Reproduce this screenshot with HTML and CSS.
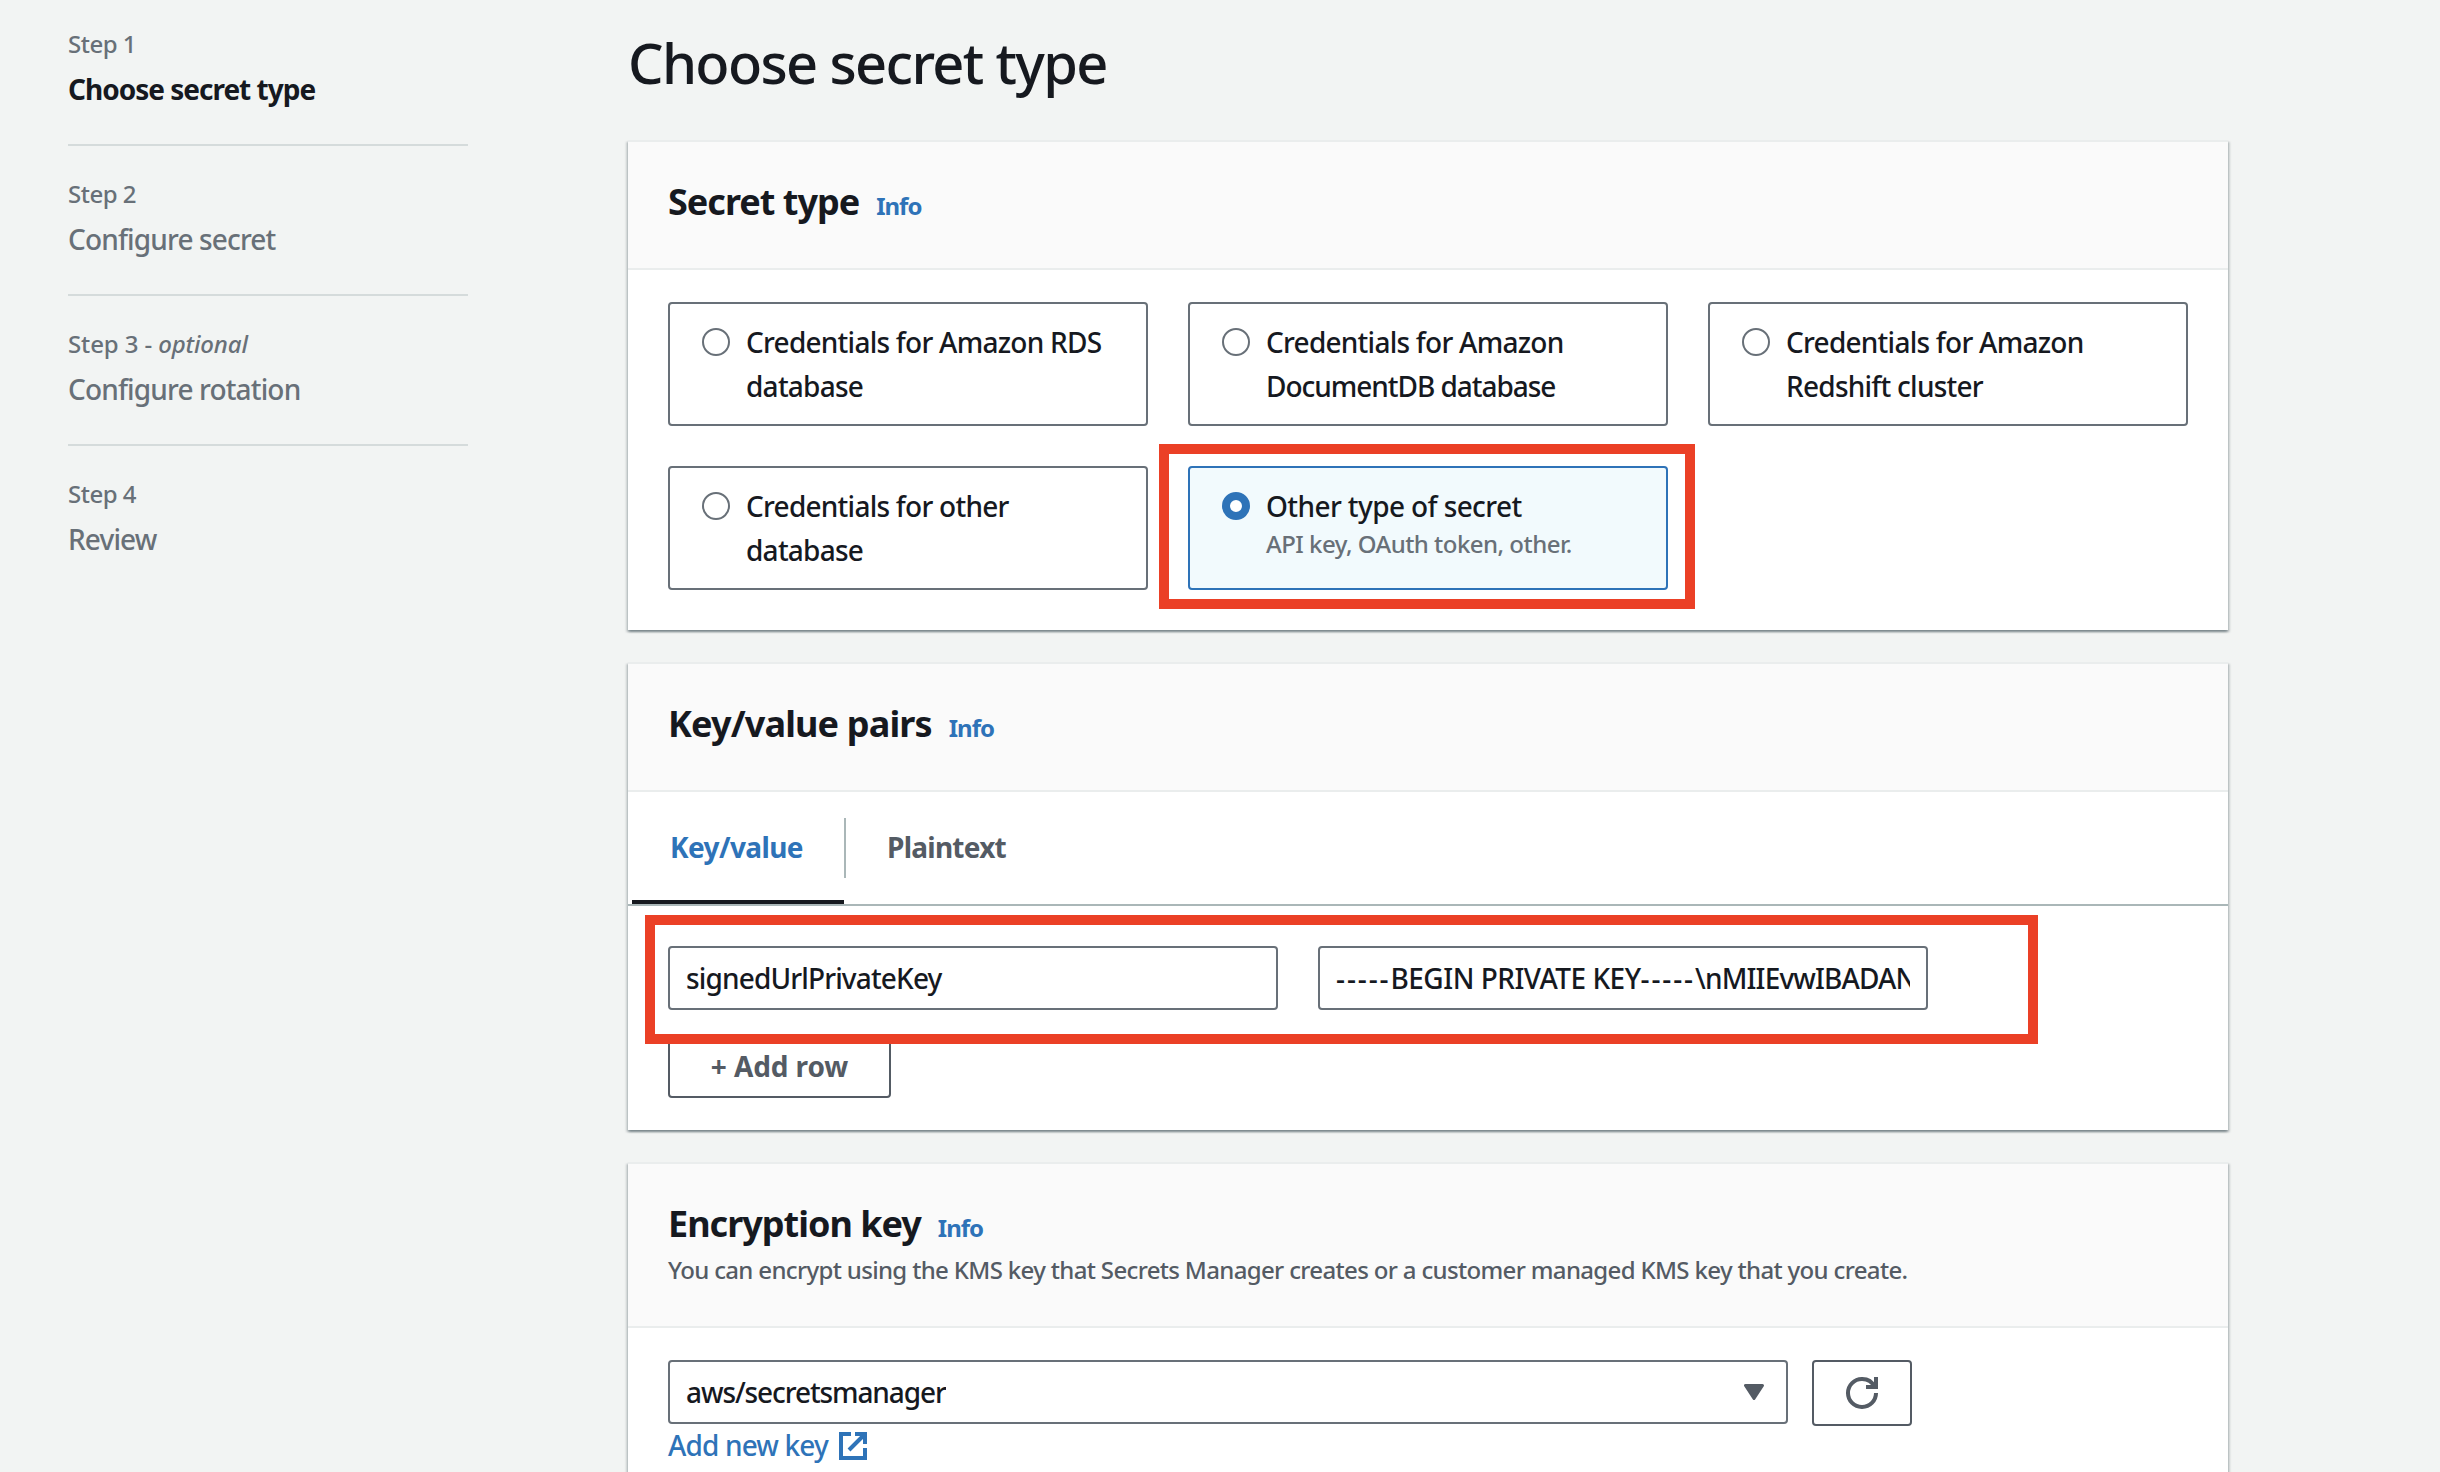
FILE: index.html
```html
<!DOCTYPE html>
<html lang="en">
<head>
<meta charset="utf-8">
<title>Choose secret type</title>
<link rel="stylesheet" href="styles.css">
</head>
<body>
<div class="page">
  <nav class="steps">
    <div class="step active"><div class="step-label">Step 1</div><div class="step-title">Choose secret type</div></div>
    <div class="step"><div class="step-label">Step 2</div><div class="step-title">Configure secret</div></div>
    <div class="step"><div class="step-label optional">Step 3 - <i>optional</i></div><div class="step-title">Configure rotation</div></div>
    <div class="step"><div class="step-label">Step 4</div><div class="step-title">Review</div></div>
  </nav>
  <main class="content">
    <h1>Choose secret type</h1>

    <section class="card">
      <header class="card-header">
        <div class="heading"><h2>Secret type</h2><a class="info">Info</a></div>
      </header>
      <div class="tiles">
        <label class="tile"><span class="radio"></span><span class="tile-text">Credentials for Amazon RDS database</span></label>
        <label class="tile"><span class="radio"></span><span class="tile-text">Credentials for Amazon <span class="tight">DocumentDB database</span></span></label>
        <label class="tile"><span class="radio"></span><span class="tile-text">Credentials for Amazon Redshift cluster</span></label>
        <label class="tile"><span class="radio"></span><span class="tile-text">Credentials for other<br>database</span></label>
        <label class="tile selected"><span class="radio"></span><span class="tile-text"><span class="loose">Other type of secret</span><span class="tile-desc">API key, OAuth token, other.</span></span><span class="highlight highlight-tile"></span></label>
      </div>
    </section>

    <section class="card">
      <header class="card-header">
        <div class="heading"><h2 class="loose-heading">Key/value pairs</h2><a class="info">Info</a></div>
      </header>
      <div class="tabs">
        <div class="tab current">Key/value</div>
        <div class="tab-divider"></div>
        <div class="tab plain">Plaintext</div>
      </div>
      <div class="pairs">
        <div class="pair-row">
          <div class="field"><div class="field-value">signedUrlPrivateKey</div></div>
          <div class="field"><div class="field-value"><span class="dashes">-----</span><span class="caps">BEGIN PRIVATE KEY</span><span class="dashes">-----</span>\nMIIEvwIBADAN</div></div>
        </div>
        <button class="button add-row">+ Add row</button>
        <span class="highlight highlight-pairs"></span>
      </div>
    </section>

    <section class="card last">
      <header class="card-header">
        <div class="heading"><h2>Encryption key</h2><a class="info">Info</a></div>
        <p class="description">You can encrypt using the KMS key that Secrets Manager creates or a customer managed KMS key that you create.</p>
      </header>
      <div class="encryption">
        <div class="select-row">
          <div class="field select"><div class="field-value path">aws/secretsmanager</div>
            <svg class="caret" viewBox="0 0 20 16"><path d="M1.5 1.5h17L10 14.5z"/></svg>
          </div>
          <button class="button refresh">
            <svg viewBox="0 0 16 16"><path d="M10 5h5V0M15 8a6.957 6.957 0 0 1-7 7 6.957 6.957 0 0 1-7-7 6.957 6.957 0 0 1 7-7 6.87 6.87 0 0 1 6.3 4"/></svg>
          </button>
        </div>
        <a class="add-key">Add new key
          <svg class="external" viewBox="0 0 28 28"><path d="M12 2H2v24h24V16M16 2h10v10M26 2L10 18"/></svg>
        </a>
      </div>
    </section>
  </main>
</div>
</body>
</html>
```
FILE: styles.css
```css
* { box-sizing: border-box; }
body {
  margin: 0;
  height: 1472px;
  overflow: hidden;
  background: #f2f4f3;
  color: #16191f;
  font: 500 28px/44px "Noto Sans", "Open Sans", sans-serif;
  letter-spacing: -0.85px;
}
h1, h2, p { margin: 0; }
.page {
  display: flex;
  gap: 160px;
  height: 1472px;
  padding-left: 68px;
}

.steps { width: 400px; flex: none; padding-top: 26px; color: #687078; }
.step { padding-bottom: 33px; border-bottom: 2px solid #d5dbdb; margin-bottom: 30px; }
.step:last-child { border: 0; }
.step-label { font-size: 24px; line-height: 36px; margin-bottom: 5px; letter-spacing: -0.5px; }
.step-label.optional { letter-spacing: -0.12px; }
.step.active .step-title { color: #16191f; font-weight: 700; letter-spacing: -1px; }

.content { width: 1600px; flex: none; padding-top: 28px; }
h1 { font-size: 56px; font-weight: 500; line-height: 68px; letter-spacing: -1.65px; margin-bottom: 44px; }

.card {
  background: #fff;
  border-top: 2px solid #eaeded;
  margin-bottom: 32px;
  box-shadow: 0 2px 2px rgba(0, 28, 36, .3), 2px 2px 2px rgba(0, 28, 36, .15), -2px 2px 2px rgba(0, 28, 36, .15);
}
.card-header { background: #fafafa; padding: 38px 40px 37px; height: 128px; border-bottom: 2px solid #eaeded; }
.last .card-header { height: 164px; }
.heading { display: flex; align-items: baseline; gap: 17px; height: 44px; }
h2 { font-size: 36px; font-weight: 700; line-height: 44px; letter-spacing: -1px; }
.loose-heading { letter-spacing: -0.85px; }
.info { color: #2e73b8; font-size: 24px; font-weight: 700; letter-spacing: -1px; }
.description { color: #545b64; font-size: 24px; line-height: 36px; letter-spacing: -0.66px; margin: 6px 0 0; }

.tiles { display: grid; grid-template-columns: repeat(3, 480px); grid-auto-rows: 124px; gap: 40px; padding: 32px 40px 40px; }
.tile { position: relative; display: flex; gap: 16px; border: 2px solid #687078; border-radius: 4px; padding: 16px 32px; letter-spacing: -0.75px; }
.tile.selected { border-color: #2e73b8; background: #f2fafd; }
.radio { width: 28px; height: 28px; flex: none; margin-top: 8px; border: 2px solid #687078; border-radius: 50%; background: #fff; }
.selected .radio { border: 8px solid #2e73b8; }
.tile-text { width: 382px; flex: none; }
.tight { letter-spacing: -1.03px; }
.loose { letter-spacing: -0.6px; }
.tile-desc { display: block; color: #687078; font-size: 24px; line-height: 32px; letter-spacing: -0.52px; }

.highlight { position: absolute; border: 10px solid #eb4026; pointer-events: none; }
.highlight-tile { left: -31px; top: -24px; width: 536px; height: 165px; }
.highlight-pairs { left: 17px; top: 9px; width: 1393px; height: 129px; }

.tabs { display: flex; height: 114px; padding-left: 4px; border-bottom: 2px solid #aab7b8; font-weight: 700; color: #545b64; }
.tab { padding-top: 33px; letter-spacing: -0.75px; }
.tab.current { width: 212px; padding-left: 38px; color: #2e73b8; border-bottom: 4px solid #16191f; letter-spacing: -0.6px; }
.tab-divider { width: 2px; height: 60px; margin: 26px 41px 0 0; background: #aab7b8; }

.pairs { position: relative; padding: 40px 40px 32px; }
.pair-row { display: grid; grid-template-columns: 610px 610px; gap: 40px; margin-bottom: 24px; }
.field { height: 64px; padding: 8px 16px; border: 2px solid #687078; border-radius: 4px; background: #fff; }
.field-value { overflow: hidden; white-space: nowrap; }
.dashes { letter-spacing: 1.9px; }
.caps { letter-spacing: -0.5px; }
.path { letter-spacing: -1.1px; margin-top: -1px; }
.button {
  display: flex; align-items: center; justify-content: center;
  height: 66px; padding: 0; margin: 0;
  border: 2px solid #545b64; border-radius: 4px; background: #fff; color: #545b64;
  font: inherit; font-weight: 700;
}
.add-row { width: 223px; height: 64px; letter-spacing: -0.1px; }

.encryption { padding: 32px 40px 0; }
.select-row { display: flex; gap: 24px; }
.select { display: flex; justify-content: space-between; align-items: center; width: 1120px; padding-right: 22px; }
.caret { width: 20px; height: 16px; fill: #545b64; stroke: #545b64; stroke-width: 3; stroke-linejoin: round; }
.refresh { width: 100px; }
.refresh svg { width: 32px; height: 32px; fill: none; stroke: #545b64; stroke-width: 2; }
.add-key { display: flex; align-items: center; gap: 11px; margin-top: -3px; color: #2e73b8; }
.external { width: 28px; height: 28px; margin-top: 2px; fill: none; stroke: #2e73b8; stroke-width: 4; }
.last { height: 310px; margin: 0; }
```
